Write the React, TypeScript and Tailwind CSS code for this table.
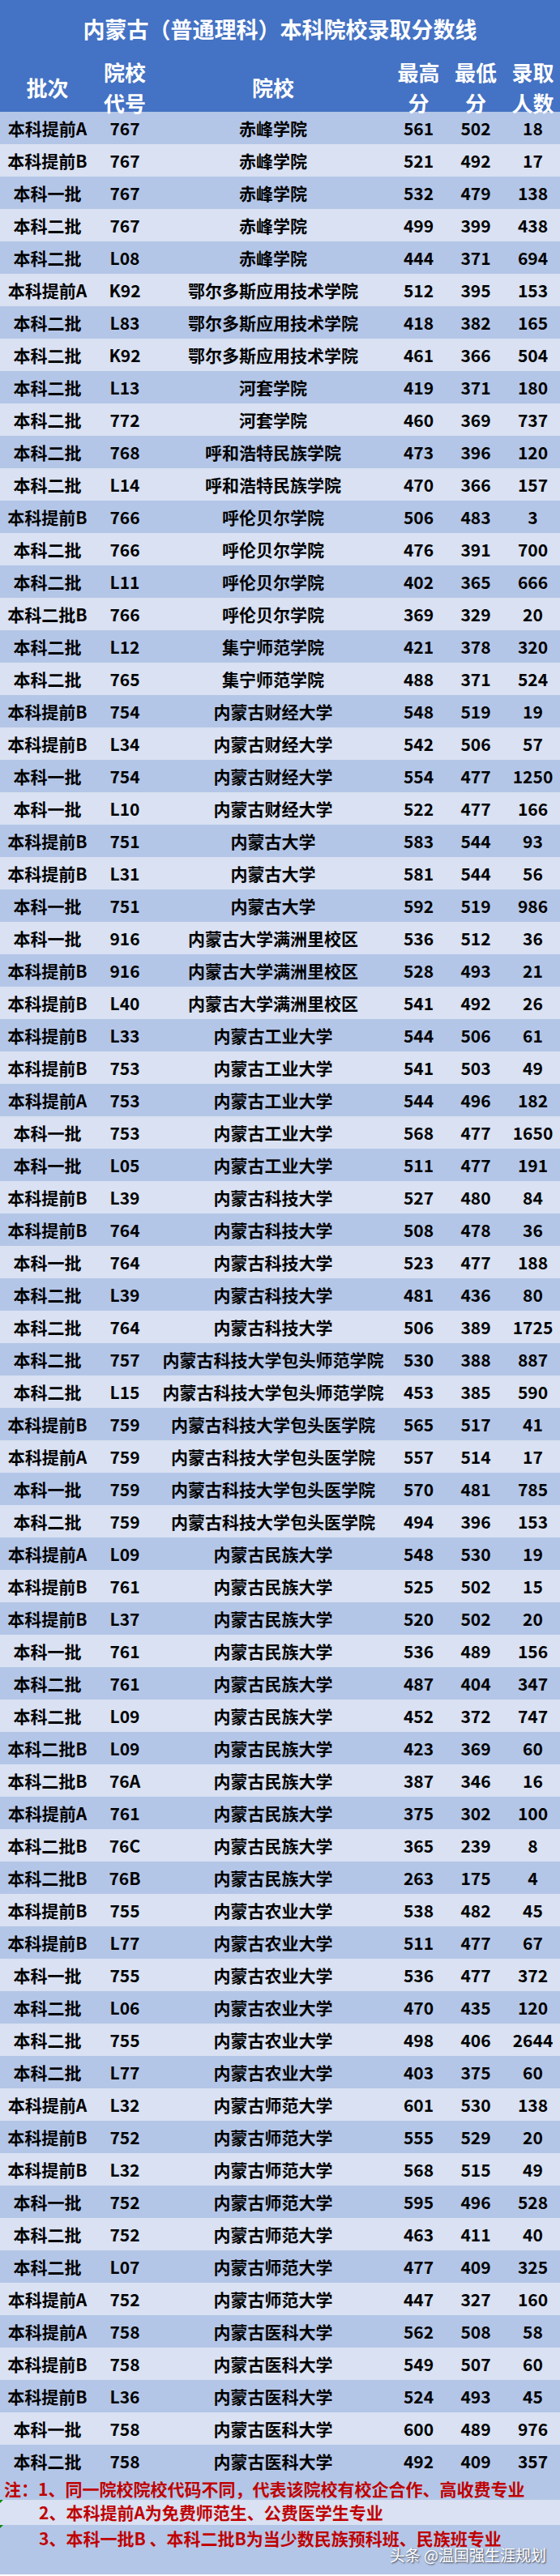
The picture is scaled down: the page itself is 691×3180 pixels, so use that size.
import React from 'react';

type Row = [string, string, string, number, number, number];

const rows: Row[] = [
  ['本科提前A', '767', '赤峰学院', 561, 502, 18],
  ['本科提前B', '767', '赤峰学院', 521, 492, 17],
  ['本科一批', '767', '赤峰学院', 532, 479, 138],
  ['本科二批', '767', '赤峰学院', 499, 399, 438],
  ['本科二批', 'L08', '赤峰学院', 444, 371, 694],
  ['本科提前A', 'K92', '鄂尔多斯应用技术学院', 512, 395, 153],
  ['本科二批', 'L83', '鄂尔多斯应用技术学院', 418, 382, 165],
  ['本科二批', 'K92', '鄂尔多斯应用技术学院', 461, 366, 504],
  ['本科二批', 'L13', '河套学院', 419, 371, 180],
  ['本科二批', '772', '河套学院', 460, 369, 737],
  ['本科二批', '768', '呼和浩特民族学院', 473, 396, 120],
  ['本科二批', 'L14', '呼和浩特民族学院', 470, 366, 157],
  ['本科提前B', '766', '呼伦贝尔学院', 506, 483, 3],
  ['本科二批', '766', '呼伦贝尔学院', 476, 391, 700],
  ['本科二批', 'L11', '呼伦贝尔学院', 402, 365, 666],
  ['本科二批B', '766', '呼伦贝尔学院', 369, 329, 20],
  ['本科二批', 'L12', '集宁师范学院', 421, 378, 320],
  ['本科二批', '765', '集宁师范学院', 488, 371, 524],
  ['本科提前B', '754', '内蒙古财经大学', 548, 519, 19],
  ['本科提前B', 'L34', '内蒙古财经大学', 542, 506, 57],
  ['本科一批', '754', '内蒙古财经大学', 554, 477, 1250],
  ['本科一批', 'L10', '内蒙古财经大学', 522, 477, 166],
  ['本科提前B', '751', '内蒙古大学', 583, 544, 93],
  ['本科提前B', 'L31', '内蒙古大学', 581, 544, 56],
  ['本科一批', '751', '内蒙古大学', 592, 519, 986],
  ['本科一批', '916', '内蒙古大学满洲里校区', 536, 512, 36],
  ['本科提前B', '916', '内蒙古大学满洲里校区', 528, 493, 21],
  ['本科提前B', 'L40', '内蒙古大学满洲里校区', 541, 492, 26],
  ['本科提前B', 'L33', '内蒙古工业大学', 544, 506, 61],
  ['本科提前B', '753', '内蒙古工业大学', 541, 503, 49],
  ['本科提前A', '753', '内蒙古工业大学', 544, 496, 182],
  ['本科一批', '753', '内蒙古工业大学', 568, 477, 1650],
  ['本科一批', 'L05', '内蒙古工业大学', 511, 477, 191],
  ['本科提前B', 'L39', '内蒙古科技大学', 527, 480, 84],
  ['本科提前B', '764', '内蒙古科技大学', 508, 478, 36],
  ['本科一批', '764', '内蒙古科技大学', 523, 477, 188],
  ['本科二批', 'L39', '内蒙古科技大学', 481, 436, 80],
  ['本科二批', '764', '内蒙古科技大学', 506, 389, 1725],
  ['本科二批', '757', '内蒙古科技大学包头师范学院', 530, 388, 887],
  ['本科二批', 'L15', '内蒙古科技大学包头师范学院', 453, 385, 590],
  ['本科提前B', '759', '内蒙古科技大学包头医学院', 565, 517, 41],
  ['本科提前A', '759', '内蒙古科技大学包头医学院', 557, 514, 17],
  ['本科一批', '759', '内蒙古科技大学包头医学院', 570, 481, 785],
  ['本科二批', '759', '内蒙古科技大学包头医学院', 494, 396, 153],
  ['本科提前A', 'L09', '内蒙古民族大学', 548, 530, 19],
  ['本科提前B', '761', '内蒙古民族大学', 525, 502, 15],
  ['本科提前B', 'L37', '内蒙古民族大学', 520, 502, 20],
  ['本科一批', '761', '内蒙古民族大学', 536, 489, 156],
  ['本科二批', '761', '内蒙古民族大学', 487, 404, 347],
  ['本科二批', 'L09', '内蒙古民族大学', 452, 372, 747],
  ['本科二批B', 'L09', '内蒙古民族大学', 423, 369, 60],
  ['本科二批B', '76A', '内蒙古民族大学', 387, 346, 16],
  ['本科提前A', '761', '内蒙古民族大学', 375, 302, 100],
  ['本科二批B', '76C', '内蒙古民族大学', 365, 239, 8],
  ['本科二批B', '76B', '内蒙古民族大学', 263, 175, 4],
  ['本科提前B', '755', '内蒙古农业大学', 538, 482, 45],
  ['本科提前B', 'L77', '内蒙古农业大学', 511, 477, 67],
  ['本科一批', '755', '内蒙古农业大学', 536, 477, 372],
  ['本科二批', 'L06', '内蒙古农业大学', 470, 435, 120],
  ['本科二批', '755', '内蒙古农业大学', 498, 406, 2644],
  ['本科二批', 'L77', '内蒙古农业大学', 403, 375, 60],
  ['本科提前A', 'L32', '内蒙古师范大学', 601, 530, 138],
  ['本科提前B', '752', '内蒙古师范大学', 555, 529, 20],
  ['本科提前B', 'L32', '内蒙古师范大学', 568, 515, 49],
  ['本科一批', '752', '内蒙古师范大学', 595, 496, 528],
  ['本科二批', '752', '内蒙古师范大学', 463, 411, 40],
  ['本科二批', 'L07', '内蒙古师范大学', 477, 409, 325],
  ['本科提前A', '752', '内蒙古师范大学', 447, 327, 160],
  ['本科提前A', '758', '内蒙古医科大学', 562, 508, 58],
  ['本科提前B', '758', '内蒙古医科大学', 549, 507, 60],
  ['本科提前B', 'L36', '内蒙古医科大学', 524, 493, 45],
  ['本科一批', '758', '内蒙古医科大学', 600, 489, 976],
  ['本科二批', '758', '内蒙古医科大学', 492, 409, 357],
];

const cols = 'grid grid-cols-[117px_74px_292px_67px_74px_67px]';

export default function App() {
  return (
    <div className="w-[691px] bg-[#b4c6e7] font-['Noto_Sans_CJK_SC',sans-serif] font-bold text-black">
      {/* Title + header */}
      <div className="bg-[#4472c4] text-white">
        <div className="h-[70px] flex items-center justify-center text-[27px] leading-none">
          内蒙古（普通理科）本科院校录取分数线
        </div>
        <div className={`${cols} h-[68px] text-[26px] leading-[38px] text-center`}>
          <div className="flex items-center justify-center">批次</div>
          <div className="flex flex-col items-center justify-center"><span>院校</span><span>代号</span></div>
          <div className="flex items-center justify-center">院校</div>
          <div className="flex flex-col items-center justify-center"><span>最高</span><span>分</span></div>
          <div className="flex flex-col items-center justify-center"><span>最低</span><span>分</span></div>
          <div className="flex flex-col items-center justify-center"><span>录取</span><span>人数</span></div>
        </div>
      </div>

      {/* Rows */}
      {rows.map((r, i) => (
        <div
          key={i}
          className={`${cols} h-10 items-center text-center text-[21px] leading-none ${
            i % 2 === 0 ? 'bg-[#b4c6e7]' : 'bg-[#d9e1f2]'
          }`}
        >
          <div>{r[0]}</div>
          <div>{r[1]}</div>
          <div className="whitespace-nowrap">{r[2]}</div>
          <div>{r[3]}</div>
          <div>{r[4]}</div>
          <div>{r[5]}</div>
        </div>
      ))}

      {/* Notes */}
      <div className="relative text-[#c00000] text-[21px] leading-none">
        <div className="h-[28px] flex items-center pl-[5px] bg-[#b4c6e7] whitespace-nowrap">
          注：1、同一院校院校代码不同，代表该院校有校企合作、高收费专业
        </div>
        <div className="relative h-[31px] flex items-center pl-[48px] bg-[#d9e1f2] whitespace-nowrap">
          <span className="absolute left-0 top-0 w-0 h-0 border-t-[4px] border-t-[#0a8a0a] border-r-[4px] border-r-transparent" />
          2、本科提前A为免费师范生、公费医学生专业
        </div>
        <div className="relative h-[61px] pt-[5px] pl-[48px] bg-[#b4c6e7] whitespace-nowrap">
          <span className="absolute left-0 top-0 w-0 h-0 border-t-[4px] border-t-[#0a8a0a] border-r-[4px] border-r-transparent" />
          <div className="h-[22px] flex items-center">3、本科一批B 、本科二批B为当少数民族预科班、民族班专业</div>
          <span className="absolute right-[17px] top-[27px] leading-none text-white font-normal text-[19px] [text-shadow:1px_1px_2px_rgba(0,0,0,0.7)]">
            头条 @温国强生涯规划
          </span>
        </div>
      </div>
    </div>
  );
}
